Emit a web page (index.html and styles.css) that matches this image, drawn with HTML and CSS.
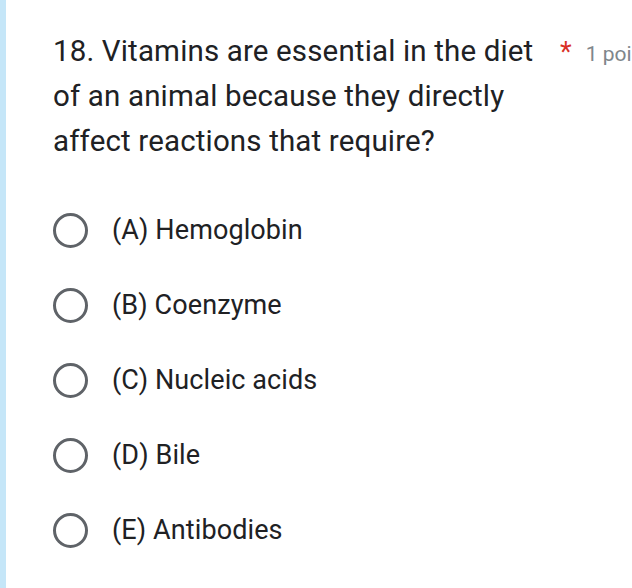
FILE: index.html
```html
<!DOCTYPE html>
<html>
<head>
<meta charset="utf-8">
<link rel="stylesheet" href="styles.css">
</head>
<body>
<div class="page">
  <div class="strip"></div>
  <div class="card">
    <div class="header">
      <div class="title">18. Vitamins are essential in the diet of an animal because they directly affect reactions that require?</div>
      <span class="req">*</span>
      <span class="points">1 point</span>
    </div>
    <div class="options">
      <div class="option"><span class="radio"></span><span class="label">(A) Hemoglobin</span></div>
      <div class="option"><span class="radio"></span><span class="label">(B) Coenzyme</span></div>
      <div class="option"><span class="radio"></span><span class="label">(C) Nucleic acids</span></div>
      <div class="option"><span class="radio"></span><span class="label">(D) Bile</span></div>
      <div class="option"><span class="radio"></span><span class="label">(E) Antibodies</span></div>
    </div>
  </div>
</div>
</body>
</html>
```
FILE: styles.css
```css
html, body {
  margin: 0;
  padding: 0;
  background: #ffffff;
  overflow: hidden;
}
.page {
  display: flex;
  width: 632px;
  height: 588px;
  font-family: Roboto, "Liberation Sans", sans-serif;
  color: #202124;
}
.strip {
  width: 6px;
  flex: none;
  background: #c5e6f8;
}
.card {
  flex: 1;
  padding: 29px 0 0 47px;
  min-width: 0;
  white-space: nowrap;
  overflow: hidden;
}
.header {
  display: flex;
  align-items: baseline;
}
.title {
  width: 495px;
  white-space: normal;
  font-size: 29.5px;
  letter-spacing: 0.15px;
  line-height: 45px;
  flex: none;
}
.req {
  color: #d93025;
  font-size: 27px;
  margin-left: 12px;
}
.points {
  color: #80868b;
  font-size: 21px;
  margin-left: 14px;
}
.options {
  display: flex;
  flex-direction: column;
  gap: 39px;
  margin-top: 48px;
}
.option {
  display: flex;
  align-items: center;
  height: 36px;
}
.radio {
  width: 29px;
  height: 29px;
  border: 3.5px solid #5f6368;
  border-radius: 50%;
  flex: none;
}
.label {
  font-size: 27px;
  letter-spacing: 0.1px;
  margin-left: 24px;
}
```
